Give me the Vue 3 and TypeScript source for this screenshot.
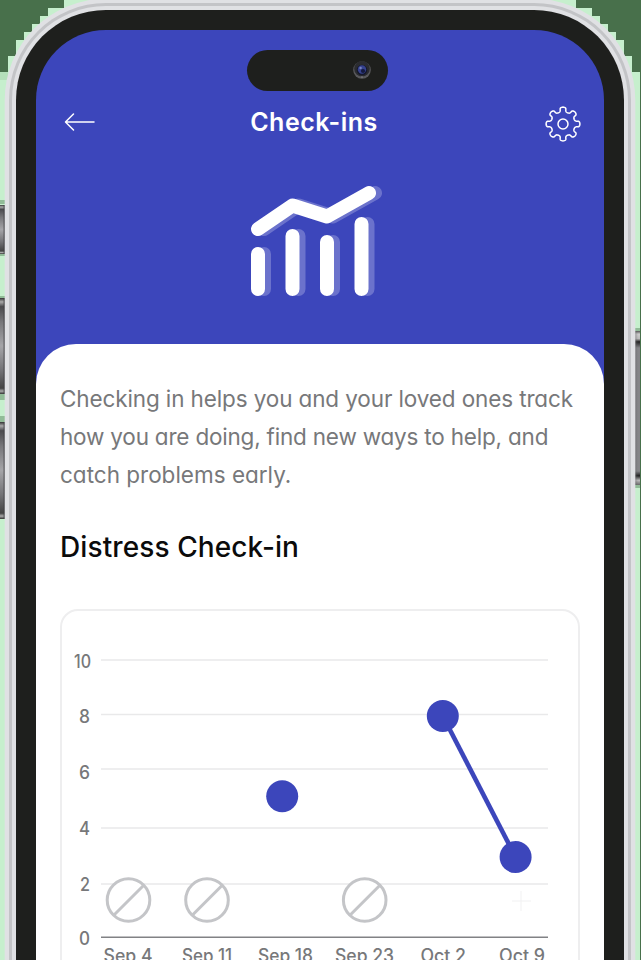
<script setup lang="ts">
interface Tick { label: string; y: number; textY: number; x: number; width: number }
interface Day { label: string; x: number; width: number }

const intro: string[] = [
  'Checking in helps you and your loved ones track',
  'how you are doing, find new ways to help, and',
  'catch problems early.',
]
const ticks: Tick[] = [
  { label: '10', y: 50, textY: 58, x: 14, width: 17 },
  { label: '8', y: 104.5, textY: 112.5, x: 19, width: 11 },
  { label: '6', y: 159, textY: 168.5, x: 19, width: 11 },
  { label: '4', y: 218, textY: 224.5, x: 19, width: 11 },
  { label: '2', y: 274, textY: 280.5, x: 20, width: 10 },
]
const days: Day[] = [
  { label: 'Sep 4', x: 43.5, width: 49 },
  { label: 'Sep 11', x: 122, width: 50 },
  { label: 'Sep 18', x: 198, width: 55 },
  { label: 'Sep 23', x: 275, width: 59 },
  { label: 'Oct 2', x: 360.5, width: 45.5 },
  { label: 'Oct 9', x: 439, width: 46 },
]
const skipped: number[] = [68.5, 147, 304.7]
const points = [
  { x: 222.2, y: 186.3 },
  { x: 382.8, y: 106 },
  { x: 455.6, y: 247 },
]

// Outline of an eight-tooth gear with rounded teeth and valleys.
function gearPath(): string {
  const steps = 256
  const out: string[] = []
  for (let i = 0; i < steps; i++) {
    const t = (i / steps) * Math.PI * 2
    const r = 14.5 + 2.4 * Math.cos(8 * t)
    const a = t + 0.055 * Math.sin(16 * t)
    out.push(`${(r * Math.cos(a)).toFixed(2)} ${(r * Math.sin(a)).toFixed(2)}`)
  }
  return `M${out.join('L')}Z`
}
const gear = gearPath()
</script>

<template>
  <main class="stage">
    <svg class="backdrop" width="641" height="960" viewBox="0 0 641 960" shape-rendering="crispEdges" aria-hidden="true">
      <path fill="#48704b" d="M0 0H64V8H48V16H40V24H32V32H24V40H16V56H8V72H0ZM576 0H641V960H640V72H632V56H624V40H616V32H608V24H600V16H592V8H576Z" />
      <path fill="#b4dfba" d="M0 72H8V80H0Z" />
      <path fill="#91bc97" d="M0 200H5V204H0ZM0 252H5V256H0ZM0 296H5V300H0ZM0 394H5V400H0ZM0 416H5V422H0ZM634 328H640V332H634ZM634 484H640V488H634Z" />
    </svg>
    <i class="key key-mute"></i>
    <i class="key key-up"></i>
    <i class="key key-down"></i>
    <i class="key key-power"></i>

    <div class="bezel">
      <div class="screen">
        <header class="top">
          <div class="island">
            <svg width="20" height="20" viewBox="0 0 20 20" aria-hidden="true">
              <circle cx="10" cy="10" r="8.8" fill="#59595c" />
              <circle cx="10" cy="8.7" r="7.8" fill="#2b2c30" />
              <circle cx="10" cy="10" r="5.3" fill="#15182c" />
              <circle cx="10" cy="9.5" r="4.2" fill="#36428f" />
              <circle cx="11" cy="11" r="2.1" fill="#151a3e" />
              <circle cx="8.6" cy="8" r="1.2" fill="#7682bd" />
              <circle cx="10" cy="17" r=".8" fill="#8a8a8c" />
            </svg>
          </div>
          <nav class="bar">
            <svg class="back" width="32" height="20" viewBox="0 0 32 20" fill="none" stroke="#fff" stroke-width="1.5" stroke-linecap="round" stroke-linejoin="round">
              <path d="M30 10H2M9.5 2L1.5 10L9.5 18" />
            </svg>
            <h1>Check-ins</h1>
            <svg class="gear" width="38" height="38" viewBox="-19 -19 38 38" fill="none" stroke="#fff" stroke-width="1.5">
              <path :d="gear" />
              <circle r="5" />
            </svg>
          </nav>
          <svg class="emblem" width="140" height="120" viewBox="0 0 140 120" fill="none" stroke-width="14" stroke-linecap="round" stroke-linejoin="round">
            <g stroke="#6b72cc">
              <path d="M20 48L54.5 24.5L89 35.5L131 12M20 73V108M54.5 55V108M89 61V108M123.5 43V108" />
            </g>
            <g stroke="#fff">
              <path d="M14 48L48.5 24.5L83 35.5L125 12M14 73V108M48.5 55V108M83 61V108M117.5 43V108" />
            </g>
          </svg>
        </header>

        <section class="sheet">
          <p>
            <span v-for="(line, i) in intro" :key="line" :class="`line line-${i + 1}`">{{ line }}</span>
          </p>
          <h2>Distress Check-in</h2>
          <div class="card">
            <svg class="chart" width="516" height="390" viewBox="2 1 516 390">
              <g stroke="#e9e9ea" stroke-width="1.5">
                <line v-for="t in ticks" :key="t.label" x1="41" x2="488" :y1="t.y" :y2="t.y" />
              </g>
              <path d="M41 327.2H488" stroke="#818285" stroke-width="1.6" />
              <g class="label">
                <text v-for="t in ticks" :key="t.label" :x="t.x" :y="t.textY" :textLength="t.width" lengthAdjust="spacingAndGlyphs">{{ t.label }}</text>
                <text x="19" y="335" textLength="11" lengthAdjust="spacingAndGlyphs">0</text>
                <text v-for="d in days" :key="d.label" :x="d.x" y="352" :textLength="d.width" lengthAdjust="spacingAndGlyphs">{{ d.label }}</text>
              </g>
              <g stroke="#c4c5c8" stroke-width="3" fill="#fff">
                <g v-for="x in skipped" :key="x">
                  <circle :cx="x" cy="290" r="21.3" />
                  <line :x1="x - 15" :x2="x + 15.5" y1="305.5" y2="275" />
                </g>
              </g>
              <path d="M461 281V301M452 291H471" stroke="#f1f1f2" stroke-width="1" />
              <path d="M382.8 106L455.6 247" stroke="#3c46bb" stroke-width="4.6" />
              <circle v-for="p in points" :key="p.x" :cx="p.x" :cy="p.y" r="16" fill="#3c46bb" />
            </svg>
          </div>
        </section>
      </div>
    </div>
  </main>
</template>

<style>
body { margin: 0; overflow: hidden; }
</style>

<style scoped>
.stage {
  position: relative;
  box-sizing: border-box;
  width: 641px;
  height: 960px;
  padding: 10px 17px 0 16px;
  overflow: hidden;
  background: #c6efcd;
  font-family: Inter, "Open Sans", sans-serif;
  font-feature-settings: "cv11" 1;
}
.backdrop { position: absolute; inset: 0; }
.key {
  position: absolute;
  left: 0;
  width: 5px;
  background: linear-gradient(90deg, transparent 55%, #3d3d40 100%), linear-gradient(#333 0, #aaa 4%, #4b4b4e 9%, #77777a 25%, #a5a5a8 50%, #737376 75%, #444 94%, #aaa 97%, #333 100%);
}
.key-mute { top: 205px; height: 49px; }
.key-up { top: 298px; height: 96px; }
.key-down { top: 422px; height: 97px; }
.key-power {
  top: 331px;
  left: 635px;
  height: 154px;
  background: linear-gradient(90deg, #66666988, transparent 60%), linear-gradient(#555 0, #ccc 2%, #bbb 5%, #222 7%, #858588 11%, #858588 91%, #222 94%, #bbb 97%, #666 100%);
}
.bezel {
  position: relative;
  box-sizing: border-box;
  height: 1100px;
  padding: 20px;
  border-radius: 90px;
  background: #1e1f1d;
  box-shadow: 0 0 0 4px #e0e1e4, 0 0 0 7px #c3c4c7, 0 0 0 11.3px #e0e1e4;
}
.screen {
  display: flex;
  flex-direction: column;
  height: 1060px;
  overflow: hidden;
  border-radius: 70px;
  background: #3c46bb;
}
.top {
  display: flex;
  flex: 0 0 314px;
  flex-direction: column;
  align-items: center;
}
.island {
  display: flex;
  box-sizing: border-box;
  align-items: center;
  justify-content: flex-end;
  width: 141px;
  height: 41px;
  margin: 19.5px 0 0 -5px;
  padding-right: 16px;
  border-radius: 21px;
  background: #1e1f1d;
}
.bar {
  display: grid;
  box-sizing: border-box;
  grid-template-columns: 60px 1fr 60px;
  width: 100%;
  height: 38px;
  margin-top: 14.5px;
  padding: 0 22px 0 28px;
}
.back { margin-top: 6.5px; }
.gear { justify-self: end; }
h1 {
  margin: -1px 0 0 -18px;
  color: #fff;
  font-size: 25px;
  font-weight: 600;
  letter-spacing: 0.5px;
  line-height: 36px;
  text-align: center;
  white-space: nowrap;
}
.emblem { margin: 38px 0 0 -12px; }
.sheet {
  flex: 1;
  padding: 36px 24px 0;
  border-radius: 40px 40px 0 0;
  background: #fff;
}
p {
  display: flex;
  flex-direction: column;
  margin: 0;
  color: #77787a;
  font-size: 22.5px;
  line-height: 38px;
}
.line { white-space: nowrap; }
.line-1 { letter-spacing: -0.12px; }
.line-2 { letter-spacing: -0.2px; }
.line-3 { letter-spacing: 0; }
h2 {
  margin: 33px 0 0;
  color: #0b0b0b;
  font-size: 28px;
  font-weight: 500;
  letter-spacing: 0.1px;
  line-height: 40px;
  white-space: nowrap;
}
.card {
  box-sizing: border-box;
  height: 430px;
  margin-top: 42px;
  border: 2px solid #eeeeef;
  border-radius: 18px;
}
.chart { display: block; }
.label { fill: #77787a; font-size: 18px; font-weight: 500; }
</style>
